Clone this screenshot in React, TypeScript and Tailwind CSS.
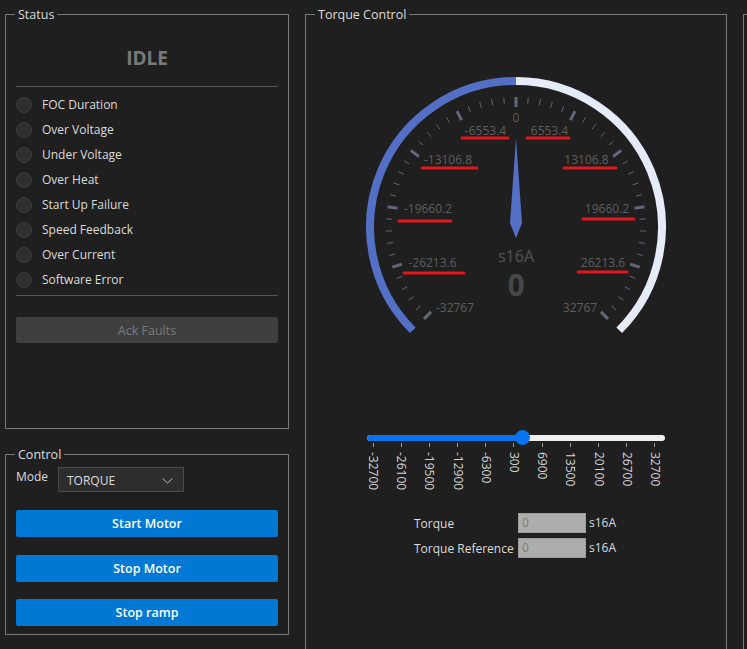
import React from "react";

const FAULTS = [
  "FOC Duration",
  "Over Voltage",
  "Under Voltage",
  "Over Heat",
  "Start Up Failure",
  "Speed Feedback",
  "Over Current",
  "Software Error",
];

const SCALE = ["-32700", "-26100", "-19500", "-12900", "-6300", "300", "6900", "13500", "20100", "26700", "32700"];

// gauge labels, placed where the reference puts them (svg coords, origin at box inner corner)
const OX = 306;
const OY = 15;
const GAUGE_LABELS = [
  { t: "-32767", x: 455, y: 307 },
  { t: "-26213.6", x: 432.5, y: 262 },
  { t: "-19660.2", x: 428, y: 208 },
  { t: "-13106.8", x: 448, y: 159 },
  { t: "-6553.4", x: 485.5, y: 130 },
  { t: "0", x: 516, y: 117 },
  { t: "6553.4", x: 549.5, y: 130 },
  { t: "13106.8", x: 586.5, y: 159 },
  { t: "19660.2", x: 607, y: 208 },
  { t: "26213.6", x: 603, y: 262 },
  { t: "32767", x: 580, y: 307 },
];

const RED_LINES = [
  [462, 508, 138],
  [527, 569, 138],
  [422, 477, 168],
  [564, 616, 168],
  [399, 451, 221],
  [583, 634, 219],
  [404, 464, 273],
  [578, 627, 272],
];

const CX = 516 - OX;
const CY = 227 - OY;

const pt = (deg: number, r: number) => {
  const a = (deg * Math.PI) / 180;
  return [CX + r * Math.sin(a), CY - r * Math.cos(a)];
};

const arcPath = (from: number, to: number, r: number) => {
  const [x1, y1] = pt(from, r);
  const [x2, y2] = pt(to, r);
  const large = Math.abs(to - from) > 180 ? 1 : 0;
  return `M ${x1} ${y1} A ${r} ${r} 0 ${large} 1 ${x2} ${y2}`;
};

function Gauge() {
  const ticks = [];
  for (let i = 0; i <= 50; i++) {
    const deg = -135 + i * 5.4;
    const major = i % 5 === 0;
    const [x1, y1] = pt(deg, 130);
    const [x2, y2] = pt(deg, major ? 120 : 124);
    ticks.push(
      <line
        key={i}
        x1={x1}
        y1={y1}
        x2={x2}
        y2={y2}
        stroke="#63677a"
        strokeWidth={major ? 3 : 1}
      />
    );
  }
  return (
    <svg width="420" height="320" viewBox="0 0 420 320" className="block">
      <path d={arcPath(-135, 0, 146)} fill="none" stroke="#5470c6" strokeWidth="8" />
      <path d={arcPath(0, 135, 146)} fill="none" stroke="#e6ebf8" strokeWidth="8" />
      {ticks}
      {GAUGE_LABELS.map((l) => (
        <text
          key={l.t}
          x={l.x - OX}
          y={l.y - OY}
          textAnchor="middle"
          dominantBaseline="central"
          fontSize="12"
          fill="#5e5e5e"
        >
          {l.t}
        </text>
      ))}
      {RED_LINES.map(([x1, x2, y], i) => (
        <line
          key={i}
          x1={x1 - OX}
          x2={x2 - OX}
          y1={y - OY}
          y2={y - OY}
          stroke="#e3161d"
          strokeWidth="3"
          strokeLinecap="round"
        />
      ))}
      <polygon
        points={`${CX},${138 - OY} ${CX + 6},${223 - OY} ${CX},${238 - OY} ${CX - 6},${223 - OY}`}
        fill="#5470c6"
      />
      <text x={CX} y={256 - OY} textAnchor="middle" dominantBaseline="central" fontSize="16" fill="#555">
        s16A
      </text>
      <text
        x={CX}
        y={284 - OY}
        textAnchor="middle"
        dominantBaseline="central"
        fontSize="30"
        fontWeight="bold"
        fill="#474747"
      >
        0
      </text>
    </svg>
  );
}

function Box({ title, className, children }: { title?: string; className: string; children?: React.ReactNode }) {
  return (
    <div className={`relative border border-[#7a7a7a] shrink-0 ${className}`}>
      {title && (
        <span className="absolute -top-[9px] left-[9px] px-[3px] bg-[#1f1f1f] text-[12.5px] leading-[17px] text-[#dcdcdc]">
          {title}
        </span>
      )}
      {children}
    </div>
  );
}

export default function App() {
  return (
    <div className="w-[747px] h-[649px] overflow-hidden bg-[#1f1f1f] flex gap-[16px] pl-[5px] pt-[14px] font-['Segoe_UI','Open_Sans',sans-serif] text-[12px] text-[#dcdcdc]">
      <div className="w-[284px] shrink-0 flex flex-col gap-[25px]">
        <Box title="Status" className="h-[415px] px-[10px]">
          <div className="pt-[31px] text-center text-[19px] leading-[24px] font-bold text-[#7a7a7a]">IDLE</div>
          <div className="mt-[16px] h-px bg-[#555]" />
          <div className="mt-[5px] flex flex-col">
            {FAULTS.map((f) => (
              <div key={f} className="h-[25px] flex items-center gap-[10px]">
                <span className="w-4 h-4 rounded-full bg-[#2f2f2f] border border-[#3d3d3d]" />
                <span className="leading-[17px]">{f}</span>
              </div>
            ))}
          </div>
          <div className="mt-[3px] h-px bg-[#555]" />
          <button className="mt-[21px] w-full h-[26px] pt-[2px] rounded-[2px] bg-[#3f3f3f] text-[#7a7a7a] text-[12.5px]">
            Ack Faults
          </button>
        </Box>
        <Box title="Control" className="h-[181px] px-[10px]">
          <div className="mt-[12px] flex items-start">
            <span className="w-[42px] leading-[17px] mt-[1px]">Mode</span>
            <div className="w-[126px] h-[25px] border border-[#4a4a4a] bg-[#2d2d2d] flex items-center justify-between pl-[8px] pr-[10px] pt-[2px]">
              <span className="text-[12px]">TORQUE</span>
              <svg width="11" height="6" viewBox="0 0 11 6">
                <polyline points="0.5,0.5 5.5,5 10.5,0.5" fill="none" stroke="#bbb" strokeWidth="1" />
              </svg>
            </div>
          </div>
          {["Start Motor", "Stop Motor", "Stop ramp"].map((b, i) => (
            <button
              key={b}
              className={`${i === 2 ? "mt-[17px]" : "mt-[18px]"} block w-full h-[27px] pt-[2px] rounded-[2px] bg-[#0078d4] text-white font-semibold text-[12.5px]`}
            >
              {b}
            </button>
          ))}
        </Box>
      </div>

      <Box title="Torque Control" className="w-[422px] h-[700px]">
        <Gauge />
        <div className="ml-[61px] w-[298px] mt-[100px]">
          <div className="relative h-[6px] rounded-full bg-[#efefef]">
            <div className="absolute left-0 top-0 h-[6px] w-[156px] rounded-full bg-[#0a74f0]" />
            <div className="absolute left-[148px] -top-[5px] w-[15px] h-[15px] rounded-full bg-[#0a74f0]" />
          </div>
          <div className="mt-[2px] pr-[4px] flex justify-between">
            {SCALE.map((s) => (
              <div key={s} className="w-[12px] flex flex-col items-center">
                <div className="w-px h-[4px] bg-[#9a9a9a]" />
                <span className="mt-[5px] [writing-mode:vertical-rl] text-[12px] leading-[12px] text-[#d6d6d6]">{s}</span>
              </div>
            ))}
          </div>
        </div>
        <div className="ml-[108px] mt-[23px] flex flex-col gap-[5px]">
          {["Torque", "Torque Reference"].map((l) => (
            <div key={l} className="flex items-center">
              <span className="w-[104px] whitespace-nowrap leading-[17px]">{l}</span>
              <div className="w-[68px] h-[20px] bg-[#adadad] border border-[#9c9c9c] pl-[3px] text-[#7c7c7c] leading-[18px]">0</div>
              <span className="ml-[3px]">s16A</span>
            </div>
          ))}
        </div>
      </Box>

      <Box className="w-[100px] h-[700px]" />
    </div>
  );
}
